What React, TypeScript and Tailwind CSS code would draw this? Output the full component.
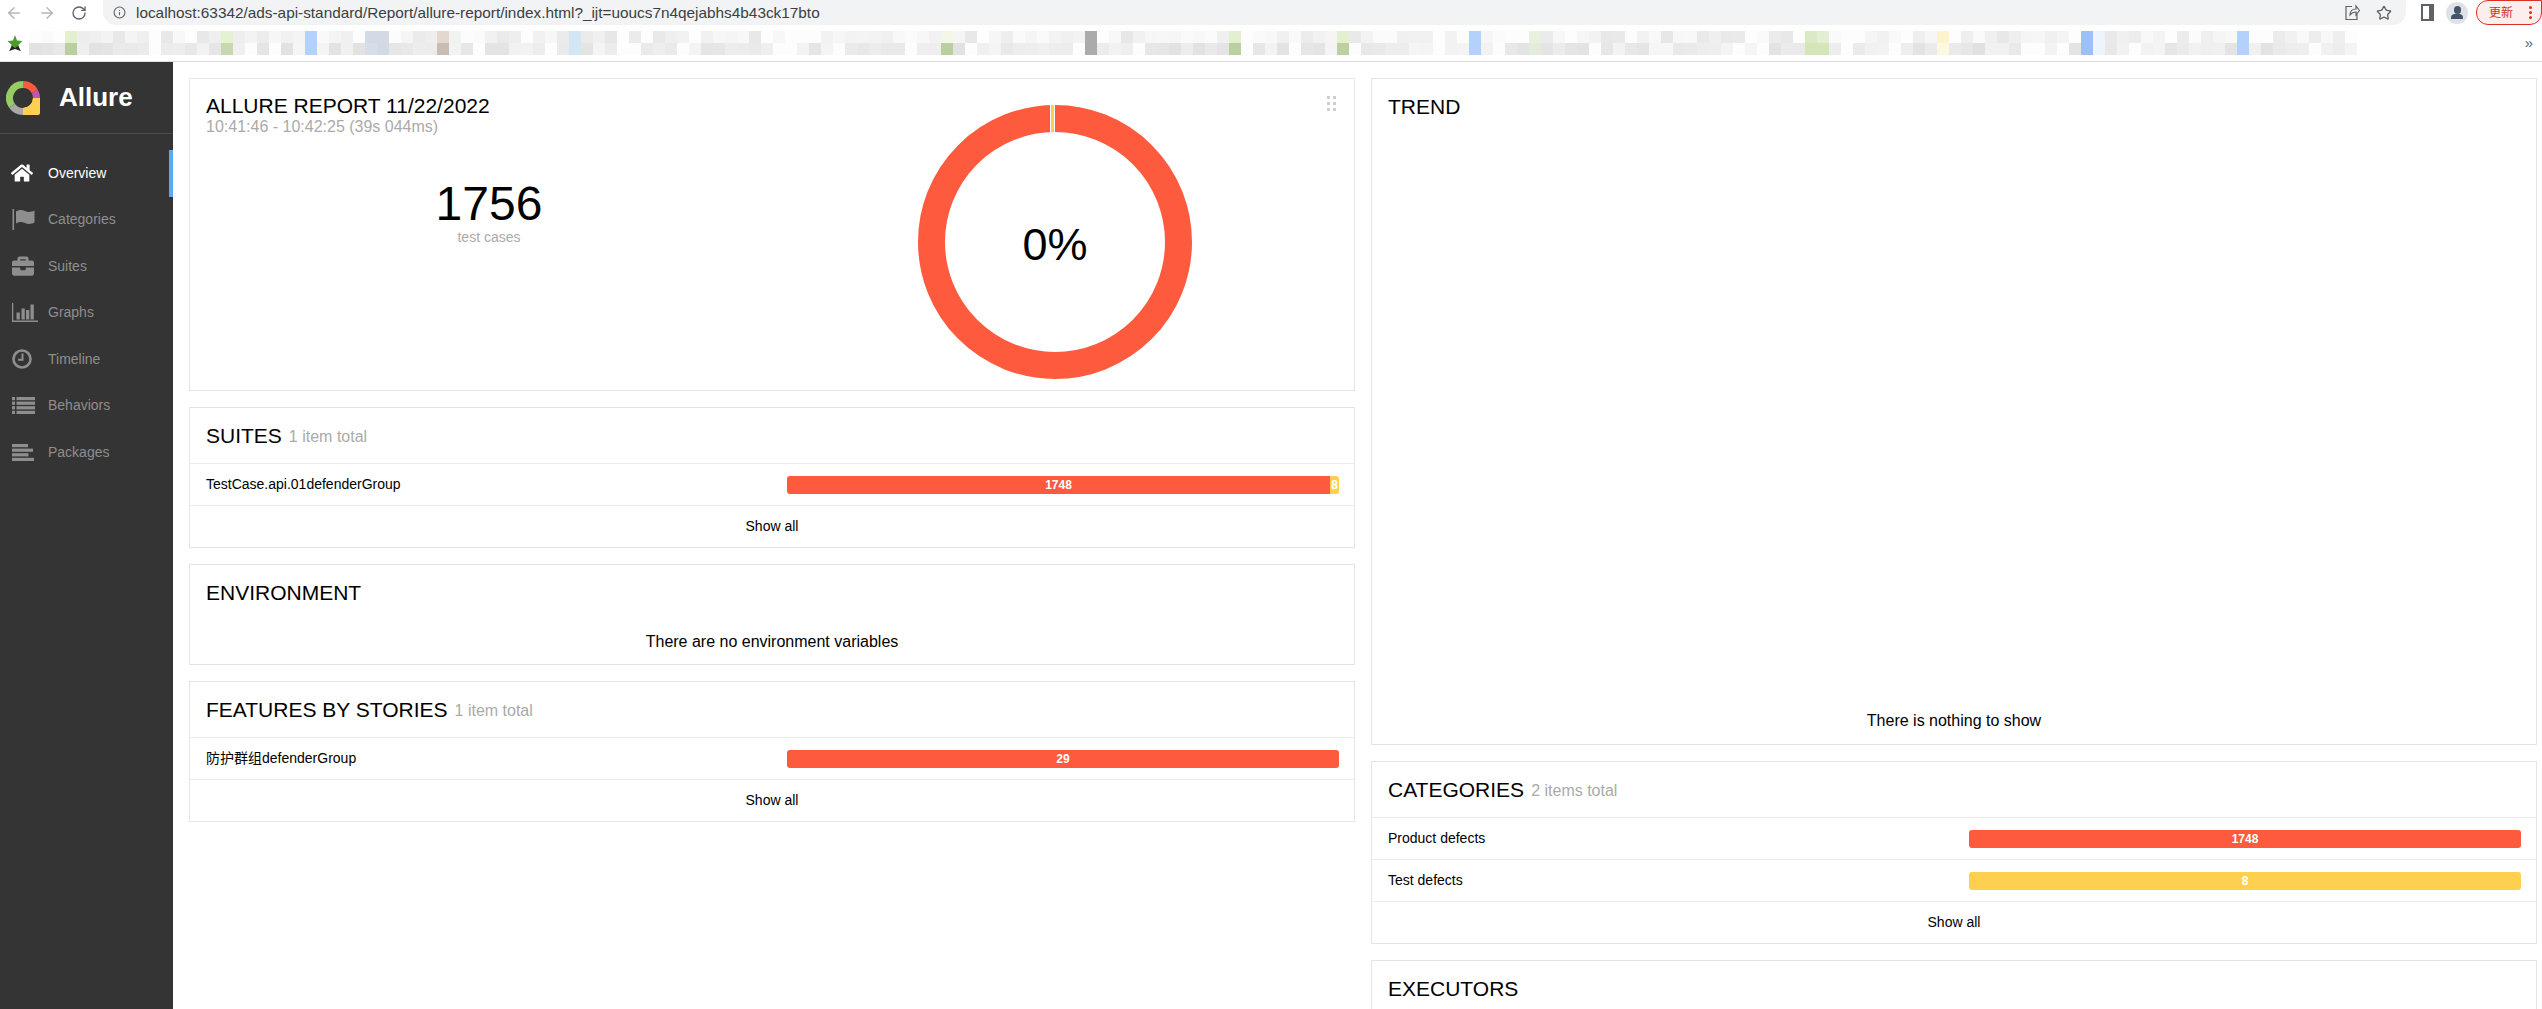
import { ArrowLeft, ArrowRight, Info, RotateCw, Star } from "lucide-react";
import { FaBriefcase, FaHome } from "react-icons/fa";

const font = "font-['Liberation_Sans','Noto_Sans_CJK_SC',sans-serif]";

// blurred bookmark bar: [top, bottom] colours by tile index
const accents: Record<number, [string, string]> = {
  3: ["#e3efcf", "#b9cf9f"],
  16: ["#e6f0d3", "#c6d9ae"],
  23: ["#b3d1fb", "#b3d1fb"],
  28: ["#d3dae5", "#d6deea"],
  29: ["#d3dae5", "#d3dae5"],
  34: ["#e2d8cd", "#c9bcb4"],
  45: ["#d3e6f3", "#d3e6f3"],
  76: ["#f2f7e8", "#bacf9f"],
  88: ["#ababab", "#ababab"],
  100: ["#e4efcf", "#bbd0a0"],
  109: ["#e4efcf", "#bcd0a2"],
  120: ["#b3d1fb", "#b3d1fb"],
  125: ["#e8f1e0", "#e3ecd9"],
  148: ["#d9eac4", "#d2e6b8"],
  149: ["#e2efd3", "#d2e6b8"],
  159: ["#fdf3cd", "#fdf8e0"],
  171: ["#9cc2f5", "#9cc2f5"],
  172: ["#eef4fd", "#eef4fd"],
  184: ["#b3d1fb", "#b3d1fb"],
};

const grey = (i: number, row: number) => {
  const n = Math.abs(Math.sin(i * 12.9898 + row * 78.233) * 43758.5453) % 1;
  if (n < 0.14) return "#fdfdfd";
  const v = Math.round((row ? 222 : 228) + n * 24);
  return `rgb(${v},${v},${v})`;
};

const tiles = Array.from({ length: 194 }, (_, i) => {
  const a = accents[i];
  return a ? a : [grey(i, 0), grey(i, 1)];
});

const HomeIcon = () => <FaHome size={22} className="-ml-[1px]" />;
const SuitesIcon = () => <FaBriefcase size={22} />;

const FlagIcon = () => (
  <svg width="23" height="21" viewBox="0 0 23 21" fill="currentColor">
    <rect x="0.500" y="0" width="1.600" height="21" />
    <path d="M4 2.500c3-2 6-2 9-.500 3 1.400 6 1.300 9.500-.500v12c-3.500 1.800-6.500 1.900-9.500.500-3-1.500-6-1.500-9 .500z" />
  </svg>
);

const GraphsIcon = () => (
  <svg width="26" height="19" viewBox="0 0 26 19" fill="currentColor">
    <path d="M0 0h1.300v17.500H26V19H0z" />
    <rect x="4.500" y="9.500" width="3.300" height="7" />
    <rect x="9.500" y="5.500" width="3.300" height="11" />
    <rect x="14" y="7" width="3.300" height="9.500" />
    <rect x="18.500" y="1.500" width="3.300" height="15" />
  </svg>
);

const ClockIcon = () => (
  <svg width="20" height="20" viewBox="0 0 20 20" fill="none" stroke="currentColor">
    <circle cx="10" cy="10" r="8.500" strokeWidth="2.600" />
    <path d="M10.500 4.500V10.800H6" strokeWidth="2" />
  </svg>
);

const ListIcon = () => (
  <svg width="23" height="17" viewBox="0 0 23 17" fill="currentColor">
    {[0, 4.600, 9.200, 13.800].map((y) => (
      <g key={y}>
        <rect x="0" y={y} width="3" height="3.200" />
        <rect x="4.500" y={y} width="18.500" height="3.200" />
      </g>
    ))}
  </svg>
);

const PackagesIcon = () => (
  <svg width="23" height="17" viewBox="0 0 23 17" fill="currentColor">
    <rect x="0" y="0" width="16" height="3.200" />
    <rect x="0" y="4.600" width="21" height="3.200" />
    <rect x="0" y="9.200" width="16.500" height="3.200" />
    <rect x="0" y="13.800" width="22" height="3.200" />
  </svg>
);

const nav = [
  { label: "Overview", icon: HomeIcon, active: true },
  { label: "Categories", icon: FlagIcon },
  { label: "Suites", icon: SuitesIcon },
  { label: "Graphs", icon: GraphsIcon },
  { label: "Timeline", icon: ClockIcon },
  { label: "Behaviors", icon: ListIcon },
  { label: "Packages", icon: PackagesIcon },
];

const polar = (deg: number, r: number) => {
  const a = ((deg - 90) * Math.PI) / 180;
  return `${17 + r * Math.cos(a)} ${17 + r * Math.sin(a)}`;
};

const arc = (from: number, to: number) =>
  `M${polar(from, 13.5)} A13.5 13.5 0 ${to - from > 180 ? 1 : 0} 1 ${polar(to, 13.5)}`;

const Logo = () => (
  <svg width="34" height="34" viewBox="0 0 34 34" fill="none" strokeWidth="7">
    <path d={arc(235, 360)} stroke="#97cc64" />
    <path d={arc(0, 60)} stroke="#fd5a3e" />
    <path d={arc(60, 90)} stroke="#c354b0" />
    <path d={arc(90, 180)} stroke="#ffd050" />
    <path d={arc(180, 235)} stroke="#a9a9a9" />
    <path d="M27 17h7v15a2 2 0 0 1-2 2H17v-7A10 10 0 0 0 27 17z" fill="#ffd050" />
  </svg>
);

const Card = ({
  title,
  total,
  className = "",
  children,
}: {
  title: string;
  total?: string;
  className?: string;
  children?: React.ReactNode;
}) => (
  <div className={`border border-[#e5e5e5] bg-white flex flex-col ${className}`}>
    <div className="h-[55px] shrink-0 flex items-center pl-4 gap-[7px]">
      <span className="text-[21px] text-black">{title}</span>
      {total && <span className="text-[16px] text-[#aaa] pt-[2px]">{total}</span>}
    </div>
    {children}
  </div>
);

const Row = ({ name, children }: { name: string; children: React.ReactNode }) => (
  <div className="h-[42px] border-t border-[#ececec] flex items-center pl-4 pr-[15px] text-[14px] text-black">
    <span>{name}</span>
    <div className="ml-auto w-[552px] h-[18px] flex rounded-[3px] overflow-hidden text-white text-[12px] font-bold leading-[18px] text-center">
      {children}
    </div>
  </div>
);

const ShowAll = () => (
  <div className="h-[42px] border-t border-[#ececec] flex items-center justify-center text-[14px] text-black">
    Show all
  </div>
);

export default function App() {
  return (
    <div className={`${font} w-[2542px] h-[1009px] overflow-hidden bg-white flex flex-col`}>
      {/* browser toolbar */}
      <div className="h-[25px] shrink-0 flex items-center">
        <div className="w-[103px] shrink-0 flex items-center pl-[5px] gap-[15px]">
          <ArrowLeft size={18} className="text-[#b4b6b9]" />
          <ArrowRight size={18} className="text-[#b4b6b9]" />
          <RotateCw size={16} className="text-[#5f6368]" />
        </div>
        <div className="w-[2303px] h-[25px] shrink-0 bg-[#f1f3f4] rounded-b-[13px] flex items-center pl-[10px] pr-[12px] text-[15.350px] text-[#3c4043]">
          <Info size={13} className="text-[#5f6368] mr-[10px]" />
          <span>localhost:63342/ads-api-standard/Report/allure-report/index.html?_ijt=uoucs7n4qejabhs4b43ck17bto</span>
          <svg width="16" height="17" viewBox="0 0 16 17" fill="none" stroke="#5f6368" strokeWidth="1.2" className="ml-auto mr-[16px]">
            <path d="M8 2.500h-6v13h11v-5M6 11c0-4 2.500-6 6-6V2l3.500 4.500L12 11V8c-3 0-4.500 1-6 3z" />
          </svg>
          <Star size={16} className="text-[#5f6368] mr-[2px]" />
        </div>
        <div className="ml-[15px] w-[13px] h-[17px] border-2 border-[#5f6368] border-r-[5px]" />
        <div className="ml-[12px] w-[22px] h-[22px] rounded-full bg-[#dee1e6] flex flex-col items-center justify-center">
          <div className="w-[7px] h-[8px] rounded-full bg-[#46546b]" />
          <div className="w-[12px] h-[5px] rounded-t-[4px] bg-[#46546b]" />
        </div>
        <div className="ml-[8px] flex-1 h-[25px] rounded-l-[12px] rounded-b-[12px] border border-[#d93025] bg-[#fbeeec] flex items-center pl-[12px] gap-[16px] text-[12px] text-[#d93025]">
          <span>更新</span>
          <div className="flex flex-col gap-[2px]">
            <div className="w-[3px] h-[3px] rounded-full bg-[#d93025]" />
            <div className="w-[3px] h-[3px] rounded-full bg-[#d93025]" />
            <div className="w-[3px] h-[3px] rounded-full bg-[#d93025]" />
          </div>
        </div>
      </div>

      {/* bookmarks bar, blurred in the original */}
      <div className="h-[37px] shrink-0 border-b border-[#dadce0] flex items-center">
        <svg width="16" height="16" viewBox="0 0 16 16" className="ml-[7px] mr-[6px] shrink-0">
          <path d="M8 0l2 5.500 5.500.500-4 3.800 1.500 6-5-3-5 3 1.500-6-4-3.800 5.500-.500z" fill="#4e9a2c" />
          <path d="M2 16l3-5 3 2 3-2 3 5-6-2z" fill="#222" />
        </svg>
        <div className="flex flex-col">
          {[0, 1].map((row) => (
            <div key={row} className="flex">
              {tiles.map((t, i) => (
                <div key={i} className="w-[12px] h-[12px]" style={{ background: t[row] }} />
              ))}
            </div>
          ))}
        </div>
        <span className="ml-auto mr-[9px] text-[15px] text-[#5f6368]">»</span>
      </div>

      <div className="flex-1 flex min-h-0">
        {/* sidebar */}
        <aside className="w-[173px] shrink-0 bg-[#343434]">
          <div className="h-[72px] border-b border-[#4a4a4a] flex items-center pl-[6px] gap-[19px]">
            <Logo />
            <span className="text-[26px] font-bold text-white">Allure</span>
          </div>
          <nav className="pt-[16px]">
            {nav.map(({ label, icon: Icon, active }) => (
              <div
                key={label}
                className={`h-[46.500px] flex items-center pl-[12px] text-[14px] ${
                  active ? "text-white border-r-4 border-[#5ba9ef]" : "text-[#8e8e8e]"
                }`}
              >
                <span className="w-[36px] shrink-0 flex items-center">
                  <Icon />
                </span>
                {label}
              </div>
            ))}
          </nav>
        </aside>

        {/* content */}
        <main className="flex-1 flex gap-4 pt-4 pl-4 pr-[5px] min-w-0">
          <div className="w-[1166px] shrink-0 flex flex-col gap-4">
            <div className="relative h-[313px] border border-[#e5e5e5] grid grid-cols-2 px-4">
              <div className="pt-[16px]">
                <div className="text-[21px] leading-[21px] text-black">ALLURE REPORT 11/22/2022</div>
                <div className="text-[16px] leading-[22px] text-[#aaa]">10:41:46 - 10:42:25 (39s 044ms)</div>
                <div className="mt-[41px] text-center text-[48px] leading-[50px] text-black">1756</div>
                <div className="text-center text-[14px] leading-[16px] text-[#aaa]">test cases</div>
              </div>
              <div className="pt-[26px] flex justify-center">
                <div className="relative w-[274px] h-[274px]">
                  <svg width="274" height="274" viewBox="0 0 274 274">
                    <circle cx="137" cy="137" r="123.500" fill="none" stroke="#fd5a3e" strokeWidth="27" />
                    <rect x="132" y="0" width="5" height="27" fill="#fff" />
                    <rect x="133" y="0" width="3" height="27" fill="#ffd050" />
                  </svg>
                  <div className="absolute inset-0 flex items-center justify-center text-[45px] text-black pt-[6px]">
                    0%
                  </div>
                </div>
              </div>
              <div className="absolute top-[17px] right-[18px] grid grid-cols-2 gap-[3px]">
                {[0, 1, 2, 3, 4, 5].map((d) => (
                  <div key={d} className="w-[3px] h-[3px] bg-[#cfcfcf]" />
                ))}
              </div>
            </div>

            <Card title="SUITES" total="1 item total">
              <Row name="TestCase.api.01defenderGroup">
                <div className="flex-1 bg-[#fd5a3e]">1748</div>
                <div className="w-[9px] bg-[#ffd050]">8</div>
              </Row>
              <ShowAll />
            </Card>

            <Card title="ENVIRONMENT">
              <div className="h-[44px] flex items-center justify-center text-[16px] text-black">
                There are no environment variables
              </div>
            </Card>

            <Card title="FEATURES BY STORIES" total="1 item total">
              <Row name="防护群组defenderGroup">
                <div className="flex-1 bg-[#fd5a3e]">29</div>
              </Row>
              <ShowAll />
            </Card>
          </div>

          <div className="w-[1166px] shrink-0 flex flex-col gap-4">
            <Card title="TREND" className="h-[667px] shrink-0">
              <div className="flex-1 flex items-end justify-center pb-[11px] text-[16px] text-black">
                There is nothing to show
              </div>
            </Card>

            <Card title="CATEGORIES" total="2 items total" className="shrink-0">
              <Row name="Product defects">
                <div className="flex-1 bg-[#fd5a3e]">1748</div>
              </Row>
              <Row name="Test defects">
                <div className="flex-1 bg-[#ffd050]">8</div>
              </Row>
              <ShowAll />
            </Card>

            <Card title="EXECUTORS" className="h-[200px] shrink-0" />
          </div>
        </main>
      </div>
    </div>
  );
}
